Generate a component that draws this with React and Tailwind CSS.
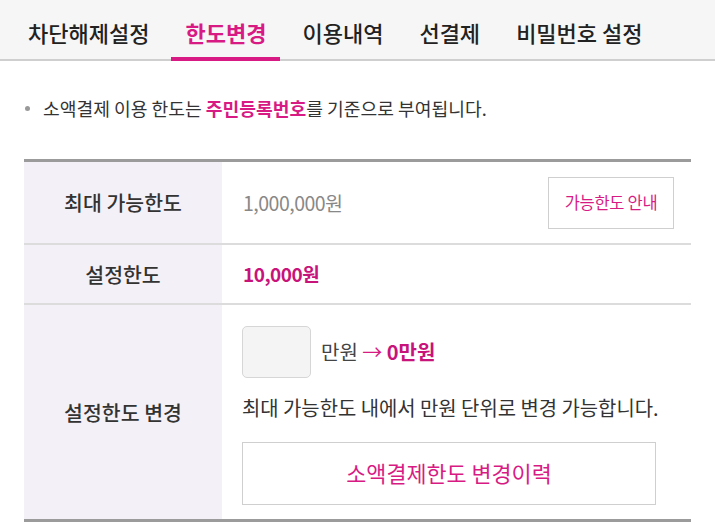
import { useState } from 'react';

const tabs = ['차단해제설정', '한도변경', '이용내역', '선결제', '비밀번호 설정'];

export default function App() {
    const [active, setActive] = useState(1);
    const [amount, setAmount] = useState('');

    return (
        <div className="w-[715px] h-[525px] bg-white overflow-hidden font-['Noto_Sans_CJK_KR','Noto_Sans',sans-serif]">
            {/* Tabs */}
            <div className="flex gap-2 pl-[14px] h-[61px] bg-[#f6f6f6] border-b-2 border-[#cfcfcf]">
                {tabs.map((t, i) => (
                    <button
                        key={t}
                        onClick={() => setActive(i)}
                        className={`relative px-[14px] h-full text-[22px] leading-none ${
                            i === active ? 'text-[#d81b84] font-bold' : 'text-[#222] font-medium'
                        }`}
                    >
                        <span className="relative top-[2px]">{t}</span>
                        {i === active && (
                            <span className="absolute left-0 right-0 -bottom-[2px] h-[4px] bg-[#d81b84]" />
                        )}
                    </button>
                ))}
            </div>

            {/* Notice */}
            <div className="flex items-center pl-[25px] mt-[34px] text-[18.2px] text-[#333]">
                <span className="w-[5px] h-[5px] rounded-full bg-[#999] mr-[13px]" />
                <span>
                    소액결제 이용 한도는 <b className="text-[#d81b84] font-bold">주민등록번호</b>를 기준으로 부여됩니다.
                </span>
            </div>

            {/* Table */}
            <div className="mx-[24px] mt-[37px] border-t-[3px] border-b-[3px] border-[#9b9b9b]">
                <div className="flex h-[83px] border-b-2 border-[#dcdcdc]">
                    <div className="w-[198px] bg-[#f3f1f7] flex items-center justify-center text-[20.5px] font-medium text-[#333]">
                        최대 가능한도
                    </div>
                    <div className="flex-1 flex items-center justify-between pl-[21px] pr-[17px]">
                        <span className="text-[19.5px] text-[#888] tracking-[-0.5px]">1,000,000원</span>
                        <button className="w-[126px] h-[52px] border border-[#cfcfcf] text-[16.5px] text-[#d81b84] tracking-[-0.3px]">
                            가능한도 안내
                        </button>
                    </div>
                </div>

                <div className="flex h-[60px] border-b-2 border-[#dcdcdc]">
                    <div className="w-[198px] bg-[#f3f1f7] flex items-center justify-center text-[20.5px] font-medium text-[#333]">
                        설정한도
                    </div>
                    <div className="flex-1 flex items-center pl-[21px]">
                        <span className="text-[19px] font-bold text-[#c8137a] tracking-[-0.5px]">10,000원</span>
                    </div>
                </div>

                <div className="flex h-[214px]">
                    <div className="w-[198px] bg-[#f3f1f7] flex items-center justify-center text-[20.5px] font-medium text-[#333]">
                        설정한도 변경
                    </div>
                    <div className="flex-1 flex flex-col pl-[20px] pt-[21px]">
                        <div className="flex items-center gap-[10px]">
                            <input
                                value={amount}
                                onChange={(e) => setAmount(e.target.value.replace(/\D/g, ''))}
                                className="w-[69px] h-[52px] rounded-[5px] bg-[#f4f4f4] border border-[#d6d6d6] text-center text-[18px] outline-none"
                            />
                            <span className="text-[20px] text-[#444]">
                                만원<span className="text-[#d81b84]"> →</span>{' '}
                                <b className="text-[#c8137a] font-bold">{Number(amount || 0)}만원</b>
                            </span>
                        </div>
                        <p className="mt-[15px] h-[30px] leading-[30px] text-[19.9px] text-[#333]">
                            최대 가능한도 내에서 만원 단위로 변경 가능합니다.
                        </p>
                        <button className="mt-[19px] w-[414px] h-[63px] border border-[#cfcfcf] text-[21.8px] text-[#d81b84]">
                            소액결제한도 변경이력
                        </button>
                    </div>
                </div>
            </div>
        </div>
    );
}
